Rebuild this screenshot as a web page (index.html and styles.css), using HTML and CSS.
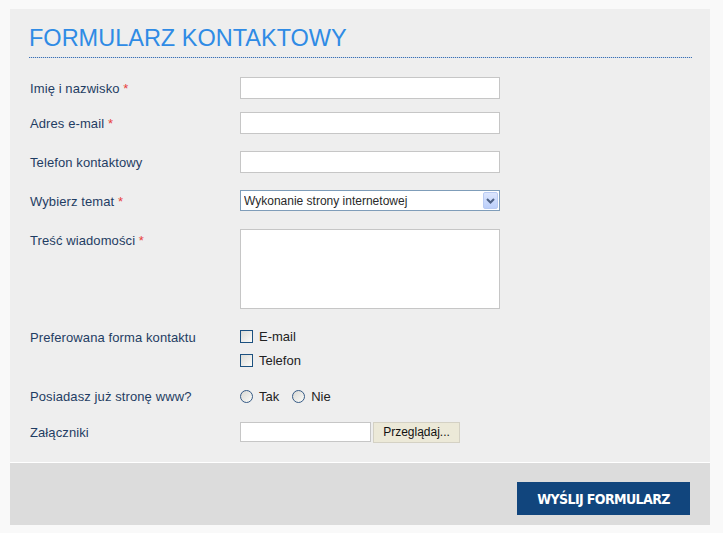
FILE: index.html
```html
<!DOCTYPE html>
<html lang="pl">
<head>
<meta charset="utf-8">
<title>Formularz kontaktowy</title>
<link rel="stylesheet" href="styles.css">
</head>
<body>
<div class="panel">
  <div class="body">
    <h1 class="title">FORMULARZ KONTAKTOWY</h1>
    <form class="form">
      <div class="row r1">
        <label class="lbl">Imię i nazwisko <span class="req">*</span></label>
        <div class="field"><input class="txt" type="text"></div>
      </div>
      <div class="row r2">
        <label class="lbl">Adres e-mail <span class="req">*</span></label>
        <div class="field"><input class="txt" type="text"></div>
      </div>
      <div class="row r3">
        <label class="lbl">Telefon kontaktowy</label>
        <div class="field"><input class="txt" type="text"></div>
      </div>
      <div class="row r4">
        <label class="lbl">Wybierz temat <span class="req">*</span></label>
        <div class="field">
          <div class="selwrap">
            <select class="sel"><option>Wykonanie strony internetowej</option></select>
            <span class="selbtn"><svg width="9" height="6" viewBox="0 0 9 6"><path d="M1 1 L4.5 4.5 L8 1" fill="none" stroke="#4d6185" stroke-width="2"/></svg></span>
          </div>
        </div>
      </div>
      <div class="row r5">
        <label class="lbl">Treść wiadomości <span class="req">*</span></label>
        <div class="field"><textarea class="area"></textarea></div>
      </div>
      <div class="row r6">
        <label class="lbl">Preferowana forma kontaktu</label>
        <div class="field stack">
          <label class="opt"><input type="checkbox" class="chk"> E-mail</label>
          <label class="opt"><input type="checkbox" class="chk"> Telefon</label>
        </div>
      </div>
      <div class="row r7">
        <label class="lbl">Posiadasz już stronę www?</label>
        <div class="field inline">
          <label class="opt"><input type="radio" name="www" class="rad"> Tak</label>
          <label class="opt"><input type="radio" name="www" class="rad"> Nie</label>
        </div>
      </div>
      <div class="row r8">
        <label class="lbl">Załączniki</label>
        <div class="field file">
          <input class="filetxt" type="text" readonly>
          <button class="browse" type="button">Przeglądaj...</button>
        </div>
      </div>
    </form>
  </div>
  <div class="foot">
    <button class="send" type="button">WYŚLIJ FORMULARZ</button>
  </div>
</div>
</body>
</html>
```

FILE: styles.css
```css
html, body {
  margin: 0;
  padding: 0;
}
body {
  background: #f9f9f9;
  font-family: "Liberation Sans", Arial, sans-serif;
  padding: 9px 0 0 10px;
}
.panel {
  width: 700px;
  background: #eeeeee;
}
.body {
  padding: 14.5px 18px 19px 19px;
}
.title {
  margin: 0;
  font-weight: normal;
  font-size: 23.5px;
  line-height: 28px;
  color: #2f8be5;
  padding-bottom: 6px;
  background-image: repeating-linear-gradient(90deg, #3c70b4 0 1px, #c9d6e6 1px 2px);
  background-size: 100% 1px;
  background-position: left bottom;
  background-repeat: no-repeat;
}
.form {
  margin-top: 19.5px;
  padding-left: 1px;
}
.row {
  display: grid;
  grid-template-columns: 210px 1fr;
  align-items: start;
}
.r2 { margin-top: 13px; }
.r3, .r4, .r5 { margin-top: 17px; }
.r6 { margin-top: 16.5px; }
.r7 { margin-top: 13.5px; }
.r8 { margin-top: 14px; }
.lbl {
  font-size: 13px;
  line-height: 20px;
  padding-top: 2px;
  color: #1f3d63;
  letter-spacing: 0.1px;
}
.req {
  color: #e8403c;
}
.field {
  height: 22px;
}
.txt {
  box-sizing: border-box;
  width: 260px;
  height: 22px;
  margin: 0;
  border: 1px solid #c6c6c6;
  background: #fff;
  display: block;
}
.selwrap {
  position: relative;
  width: 260px;
  height: 21px;
}
.sel {
  box-sizing: border-box;
  width: 260px;
  height: 21px;
  margin: 0;
  border: 1px solid #7f9db9;
  background: #fff;
  appearance: none;
  -webkit-appearance: none;
  font-family: "Liberation Sans", Arial, sans-serif;
  font-size: 12px;
  color: #2a2a2a;
  padding: 0 0 0 3px;
  border-radius: 0;
  display: block;
}
.selbtn {
  position: absolute;
  right: 2px;
  top: 2px;
  width: 15px;
  height: 17px;
  box-sizing: border-box;
  border: 1px solid #b9cbf3;
  border-radius: 2px;
  background: linear-gradient(#dce6fd, #bccffa);
  display: flex;
  align-items: center;
  justify-content: center;
}
.r5 .field { height: 80px; }
.area {
  box-sizing: border-box;
  width: 260px;
  height: 80px;
  margin: 0;
  border: 1px solid #c6c6c6;
  background: #fff;
  resize: none;
  display: block;
}
.stack {
  height: auto;
  display: flex;
  flex-direction: column;
  gap: 2px;
}
.inline {
  display: flex;
  gap: 13px;
}
.opt {
  display: flex;
  align-items: center;
  height: 22px;
  font-size: 13px;
  color: #222;
  gap: 6px;
}
.chk, .rad {
  appearance: none;
  -webkit-appearance: none;
  margin: 0;
  width: 13px;
  height: 13px;
  box-sizing: border-box;
  border: 1px solid #1c5180;
  background: linear-gradient(135deg, #dcdcd7, #fbfbf9);
  flex: none;
}
.rad {
  border-radius: 50%;
  border-color: #355a85;
  background: linear-gradient(135deg, #d8d8d3, #fbfbf9);
}
.file {
  display: flex;
  align-items: center;
  gap: 2px;
}
.filetxt {
  box-sizing: border-box;
  width: 131px;
  height: 20px;
  margin: 0;
  border: 1px solid #c6c6c6;
  background: #fff;
}
.browse {
  box-sizing: border-box;
  width: 87px;
  height: 21px;
  margin: 0;
  padding: 0;
  border: 1px solid #d4d1c4;
  background: #ece9d8;
  font-family: "Liberation Sans", Arial, sans-serif;
  font-size: 12px;
  color: #111;
}
.foot {
  border-top: 1px solid #ffffff;
  background: #dcdcdc;
  height: 63px;
  box-sizing: border-box;
  padding: 19px 20px 0 0;
  display: flex;
  justify-content: flex-end;
  align-items: flex-start;
}
.send {
  width: 173px;
  height: 33px;
  margin: 0;
  border: 0;
  background: #11457d;
  color: #fff;
  font-family: "Liberation Sans Narrow", "DejaVu Sans Condensed", "Liberation Sans", sans-serif;
  font-weight: bold;
  font-size: 14px;
  letter-spacing: -0.6px;
  padding: 0;
}
```
